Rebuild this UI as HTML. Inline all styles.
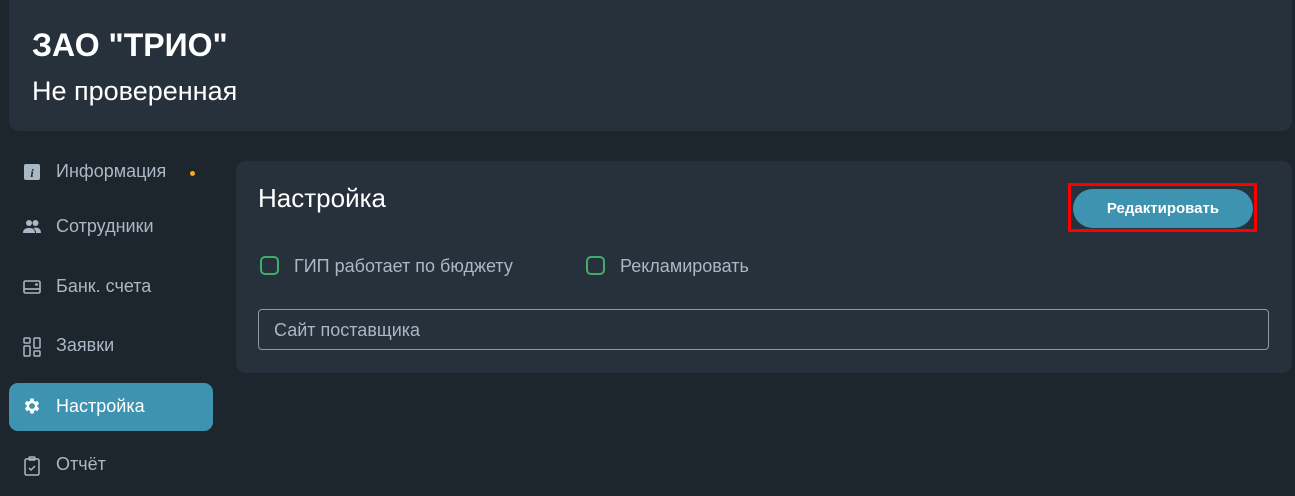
<!DOCTYPE html>
<html><head><meta charset="utf-8"><style>
*{box-sizing:border-box;margin:0;padding:0}
body{width:1295px;height:496px;background:#1e262d;font-family:"Liberation Sans",sans-serif;position:relative;overflow:hidden;color:#fff}
.hdr{position:absolute;left:9px;top:-10px;width:1283px;height:141px;background:#27313b;border-radius:10px}
.t1{position:absolute;left:32px;top:27px;font-size:32px;font-weight:bold;color:#fff}
.t2{position:absolute;left:32px;top:76px;font-size:27px;color:#fff}
.nav{position:absolute;left:9px;width:204px;height:48px;border-radius:9px;font-size:18px;color:#aab7c4}
.nav span.l{position:absolute;left:47px;top:13px}
.nav svg{position:absolute;left:14px;top:15px}
.act{background:#3d93b0;color:#fff}
.card{position:absolute;left:236px;top:161px;width:1056px;height:212px;background:#27313b;border-radius:10px}
.h{position:absolute;left:22px;top:22px;font-size:26px;color:#fff}
.red{position:absolute;left:832px;top:22px;width:189px;height:49px;border:3px solid #f00}
.btn{position:absolute;left:837px;top:28px;width:180px;height:39px;background:#3d93b0;border-radius:20px;font-size:15px;font-weight:bold;text-align:center;line-height:39px;color:#fff}
.cb{position:absolute;top:95px;width:19px;height:19px;border:2px solid #3fae6a;border-radius:5px}
.cl{position:absolute;top:95px;font-size:18px;color:#aab7c4}
.inp{position:absolute;left:22px;top:148px;width:1011px;height:41px;border:1px solid #8c99a6;border-radius:4px;font-size:18px;color:#aab7c4;padding:10px 0 0 15px}
</style></head><body>
<div class="hdr"></div>
<div class="t1">ЗАО "ТРИО"</div>
<div class="t2">Не проверенная</div>

<div class="nav" style="top:148px"><svg width="18" height="18" viewBox="0 0 18 18"><rect x="1" y="1" width="16" height="16" rx="2" fill="#aab7c4"/><text x="9" y="14" font-size="12" font-style="italic" font-weight="bold" text-anchor="middle" fill="#1e262d" font-family="Liberation Serif">i</text></svg><span class="l">Информация</span><span style="position:absolute;left:181px;top:23px;width:5px;height:5px;border-radius:50%;background:#f5a623"></span></div>
<div class="nav" style="top:203px"><svg width="18" height="18" viewBox="0 0 18 18" fill="#aab7c4"><circle cx="6" cy="5" r="3"/><circle cx="12.5" cy="5" r="3"/><path d="M0 15c0-4 3-5 6-5s6 1 6 5z"/><path d="M10 10c4-1 8 0 8 5h-5c0-2-1-4-3-5z"/></svg><span class="l">Сотрудники</span></div>
<div class="nav" style="top:263px"><svg width="18" height="18" viewBox="0 0 18 18" fill="none" stroke="#aab7c4" stroke-width="1.6"><rect x="1" y="3" width="16" height="12" rx="1.5"/><line x1="1" y1="11" x2="17" y2="11"/><rect x="12" y="5.5" width="3" height="2" fill="#aab7c4" stroke="none"/></svg><span class="l">Банк. счета</span></div>
<div class="nav" style="top:322px"><svg width="18" height="20" viewBox="0 0 18 20" fill="none" stroke="#aab7c4" stroke-width="1.5"><rect x="1" y="1" width="6" height="5" rx="1"/><rect x="1" y="9" width="6" height="10" rx="1"/><rect x="11" y="1" width="6" height="10" rx="1"/><rect x="11" y="14" width="6" height="5" rx="1"/></svg><span class="l">Заявки</span></div>
<div class="nav act" style="top:383px"><svg width="20" height="20" viewBox="0 0 24 24" fill="#fff" style="left:13px;top:13px"><path d="M19.4 13a7.5 7.5 0 000-2l2.1-1.6-2-3.5-2.5 1a7 7 0 00-1.7-1L15 3h-4l-.4 2.9a7 7 0 00-1.7 1l-2.5-1-2 3.5L6.6 11a7.5 7.5 0 000 2l-2.1 1.6 2 3.5 2.5-1a7 7 0 001.7 1L11 21h4l.4-2.9a7 7 0 001.7-1l2.5 1 2-3.5zM13 15.5a3.5 3.5 0 110-7 3.5 3.5 0 010 7z" transform="translate(-1 0)"/></svg><span class="l">Настройка</span></div>
<div class="nav" style="top:441px"><svg width="18" height="20" viewBox="0 0 18 20" fill="none" stroke="#aab7c4" stroke-width="1.5"><rect x="2" y="3" width="14" height="16" rx="1.5"/><rect x="6" y="1" width="6" height="3" rx="1"/><path d="M6 12l2 2 4-4"/></svg><span class="l">Отчёт</span></div>

<div class="card">
<div class="h">Настройка</div>
<div class="red"></div>
<div class="btn">Редактировать</div>
<div class="cb" style="left:24px"></div><div class="cl" style="left:58px">ГИП работает по бюджету</div>
<div class="cb" style="left:350px"></div><div class="cl" style="left:384px">Рекламировать</div>
<div class="inp">Сайт поставщика</div>
</div>
</body></html>
